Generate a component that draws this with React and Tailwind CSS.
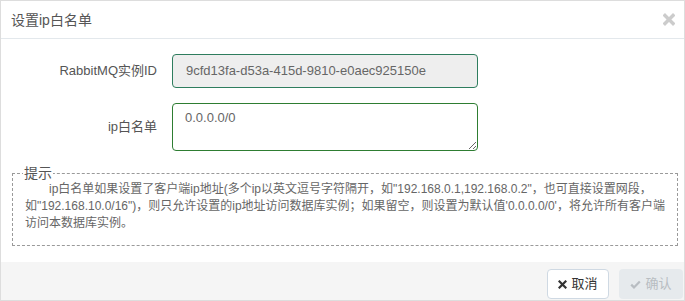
export default function App() {
  return (
    <div
      className="flex h-[301px] w-[685px] flex-col overflow-hidden border border-[#dddddd] bg-white text-[#555]"
      style={{ fontFamily: '"Liberation Sans", "Noto Sans CJK SC", sans-serif' }}
    >
      <div className="flex h-[38px] shrink-0 items-center justify-between border-b border-[#e3e8ec] pl-[10px] pr-[9px]">
        <h3 className="text-[14px] leading-none text-[#555]">设置ip白名单</h3>
        <svg width="12" height="13" viewBox="0 0 12 13">
          <path d="M2 2.5 L10 10.5 M10 2.5 L2 10.5" stroke="#cccccc" strokeWidth="3.4" strokeLinecap="square" />
        </svg>
      </div>

      <div className="flex-1 pt-[15px]">
        <div className="flex items-center">
          <label className="w-[156px] text-right text-[13px] text-[#555]">RabbitMQ实例ID</label>
          <div className="ml-[15px] flex h-[34px] w-[306px] items-center rounded-[4px] border border-[#2e7d5e] bg-[#eeeeee] px-[13px] text-[13px] text-[#666]">
            9cfd13fa-d53a-415d-9810-e0aec925150e
          </div>
        </div>

        <div className="mt-[15px] flex items-center">
          <label className="w-[156px] text-right text-[13px] text-[#555]">ip白名单</label>
          <textarea
            defaultValue="0.0.0.0/0"
            className="ml-[15px] h-[48px] w-[306px] resize-y rounded-[4px] border border-[#2e7d32] px-[12px] pt-[5px] text-[13px] leading-[18px] text-[#666] outline-none"
          />
        </div>

        <fieldset className="mr-[6px] ml-[11px] mt-[15px] border border-dashed border-[#9a9a9a] pb-[13px] pl-[12px] pr-[10px]">
          <legend className="-ml-[2px] px-[1px] text-[14px] leading-[14px] text-[#555]">提示</legend>
          <p className="mt-[1px] indent-[2em] text-[12px] leading-[17px] text-[#666]">
            ip白名单如果设置了客户端ip地址(多个ip以英文逗号字符隔开，如"192.168.0.1,192.168.0.2"，也可直接设置网段，如"192.168.10.0/16")，则只允许设置的ip地址访问数据库实例；如果留空，则设置为默认值'0.0.0.0/0'，将允许所有客户端访问本数据库实例。
          </p>
        </fieldset>
      </div>

      <div className="flex h-[38px] shrink-0 items-start justify-end gap-[10px] bg-[#f5f5f5] pr-[1px] pt-[7px]">
        <button className="flex h-[30px] w-[62px] items-center justify-center gap-[4px] rounded-[4px] border border-[#cfd9e3] bg-white text-[13px] text-[#333]">
          <svg width="9" height="9" viewBox="0 0 9 9">
            <path d="M1.5 1.5 L7.5 7.5 M7.5 1.5 L1.5 7.5" stroke="#333" strokeWidth="2.2" strokeLinecap="square" />
          </svg>
          取消
        </button>
        <button className="flex h-[30px] w-[64px] items-center justify-center gap-[4px] rounded-[4px] bg-[#e6eaed] text-[13px] text-[#b8bdc2]">
          <svg width="11" height="9" viewBox="0 0 11 9">
            <path d="M1.2 4.6 L4 7.4 L9.8 1.4" stroke="#b8bdc2" strokeWidth="2.2" fill="none" />
          </svg>
          确认
        </button>
      </div>
    </div>
  );
}
